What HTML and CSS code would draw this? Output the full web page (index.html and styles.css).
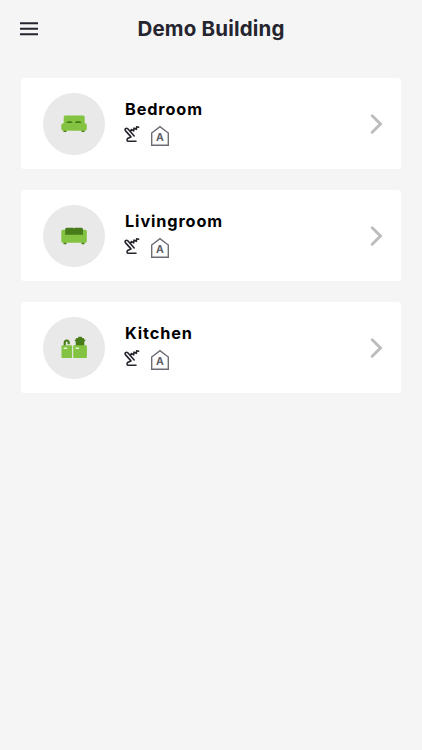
FILE: index.html
```html
<!DOCTYPE html>
<html lang="en">
<head>
<meta charset="utf-8">
<title>Demo Building</title>
<link rel="stylesheet" href="styles.css">
</head>
<body>
<svg class="symbols" aria-hidden="true">
  <symbol id="hand" viewBox="-1 0 18 20">
    <path d="M9.200 11 L2.800 3.800 C1.400 2.500 -.8 4 .4 5.600 L6 11.900 L3 13.200 C1.500 14 1.900 16.300 3.400 16.300 H11 M5.600 6.500 L6.300 4.500 L8.700 5.800 L9 3.100 L11.300 4.300 L11.700 1.700 L13.600 2.300"/>
  </symbol>
  <symbol id="house" viewBox="0 0 20 22">
    <path d="M1.700 8 L10 1.700 L18.300 8 V20.200 H1.700 Z"/>
  </symbol>
  <symbol id="chevron" viewBox="0 0 14 22">
    <path d="M2.200 2.800 L10.500 11 L2.200 19.200"/>
  </symbol>
</svg>
<header class="topbar">
  <svg class="menu" viewBox="0 0 18 14"><path d="M0 1.300h18M0 6.800h18M0 12.300h18"/></svg>
  <h1 class="title">Demo Building</h1>
</header>
<main class="rooms">
  <a class="card">
    <span class="avatar">
      <svg class="room" viewBox="0 0 40 40">
        <path class="dark" d="M9.500 26h3v2h-3zM27.500 26h3v2h-3z"/>
        <rect class="light" x="9.700" y="11.600" width="21" height="11" rx="1.500"/>
        <rect class="light" x="7.300" y="19.200" width="25.500" height="7.500" rx="2"/>
        <path class="dark" d="M12.500 19q0-2 3-2t3 2zM21 19q0-2 3-2t3.500 2z"/>
      </svg>
    </span>
    <span class="info">
      <span class="name">Bedroom</span>
      <span class="modes">
        <svg class="hand"><use href="#hand"/></svg>
        <span class="auto"><svg class="house"><use href="#house"/></svg><b class="letter">A</b></span>
      </span>
    </span>
    <svg class="chevron"><use href="#chevron"/></svg>
  </a>
  <a class="card">
    <span class="avatar">
      <svg class="room" viewBox="0 0 40 40">
        <path class="dark" d="M9.500 26h3v2.300h-3zM27.500 26h3v2.300h-3z"/>
        <path class="light" d="M8.800 13.700h3.500v4h16v-4h3q1.500 0 1.500 1.500v10q0 1.500-1.500 1.500H8.800q-1.500 0-1.500-1.500v-10q0-1.500 1.500-1.500z"/>
        <path class="dark" d="M12.500 11.800h6.500q1 0 1 1 0-1 1-1h6.500q1.500 0 1.500 1.500v5.500H11.200v-5.500q0-1.500 1.300-1.500z"/>
      </svg>
    </span>
    <span class="info">
      <span class="name">Livingroom</span>
      <span class="modes">
        <svg class="hand"><use href="#hand"/></svg>
        <span class="auto"><svg class="house"><use href="#house"/></svg><b class="letter">A</b></span>
      </span>
    </span>
    <svg class="chevron"><use href="#chevron"/></svg>
  </a>
  <a class="card">
    <span class="avatar">
      <svg class="room" viewBox="0 0 40 40">
        <path class="faucet" d="M10.700 18v-3c0-3.300 4-3.300 4-.3v1.500"/>
        <path class="dark" d="M24.300 8.800h3.600v1.300h2v1.300h1.400v1.800h-1V18h-8.600v-4.800h-.9v-1.800h1.400v-1.300h2.100z"/>
        <rect class="light" x="7.500" y="17.300" width="10.600" height="12.700" rx="1"/>
        <rect class="light" x="19.200" y="17.300" width="13.700" height="12.700" rx="1"/>
        <path class="handle" d="M9.700 20.300h3.500M21.500 20.300h3.500"/>
      </svg>
    </span>
    <span class="info">
      <span class="name">Kitchen</span>
      <span class="modes">
        <svg class="hand"><use href="#hand"/></svg>
        <span class="auto"><svg class="house"><use href="#house"/></svg><b class="letter">A</b></span>
      </span>
    </span>
    <svg class="chevron"><use href="#chevron"/></svg>
  </a>
</main>
</body>
</html>
```
FILE: styles.css
```css
* { box-sizing: border-box; }
body {
  margin: 0;
  min-height: 100vh;
  background: #f5f5f5;
  font-family: Inter, "Liberation Sans", sans-serif;
}
.symbols { display: none; }
.topbar {
  display: grid;
  grid-template-columns: 18px 1fr 18px;
  align-items: center;
  height: 58px;
  padding: 0 20px;
}
.menu { width: 18px; height: 14px; stroke: #25252f; stroke-width: 1.9; }
.title {
  margin: 0;
  text-align: center;
  font-size: 20.5px;
  line-height: 24px;
  font-weight: 700;
  letter-spacing: 0.18px;
  color: #25252f;
}
.rooms { display: grid; gap: 21px; padding: 20px 21px; }
.card {
  display: flex;
  align-items: center;
  height: 91px;
  padding: 0 17px 0 22px;
  border-radius: 3px;
  background: #fff;
}
.avatar {
  display: grid;
  place-items: center;
  width: 62px;
  height: 62px;
  border-radius: 50%;
  background: #e9e9e9;
}
.room { width: 40px; height: 40px; }
.light { fill: #83c341; }
.dark { fill: #477c18; }
.faucet { fill: none; stroke: #477c18; stroke-width: 2.2; }
.handle { stroke: #e6f2d8; stroke-width: 1.4; }
.info { flex: 1; height: 91px; padding: 21px 0 0 20px; }
.name {
  display: block;
  font-size: 16.3px;
  line-height: 21px;
  font-weight: 700;
  letter-spacing: 0.88px;
  color: #000;
}
.modes { display: flex; gap: 8px; margin: 5px 0 0 -1px; }
.hand {
  width: 18px;
  height: 20px;
  fill: none;
  stroke: #25252f;
  stroke-width: 1.6;
  stroke-linecap: round;
  stroke-linejoin: round;
}
.auto { display: grid; width: 20px; height: 22px; }
.house, .letter { grid-area: 1 / 1; }
.house { width: 20px; height: 22px; fill: none; stroke: #6c6d73; stroke-width: 1.4; }
.letter {
  align-self: end;
  justify-self: center;
  font-size: 10.5px;
  line-height: 12px;
  margin-bottom: 3px;
  color: #606168;
}
.chevron {
  width: 14px;
  height: 22px;
  fill: none;
  stroke: #bdbdbd;
  stroke-width: 3;
  stroke-linecap: round;
}
```
